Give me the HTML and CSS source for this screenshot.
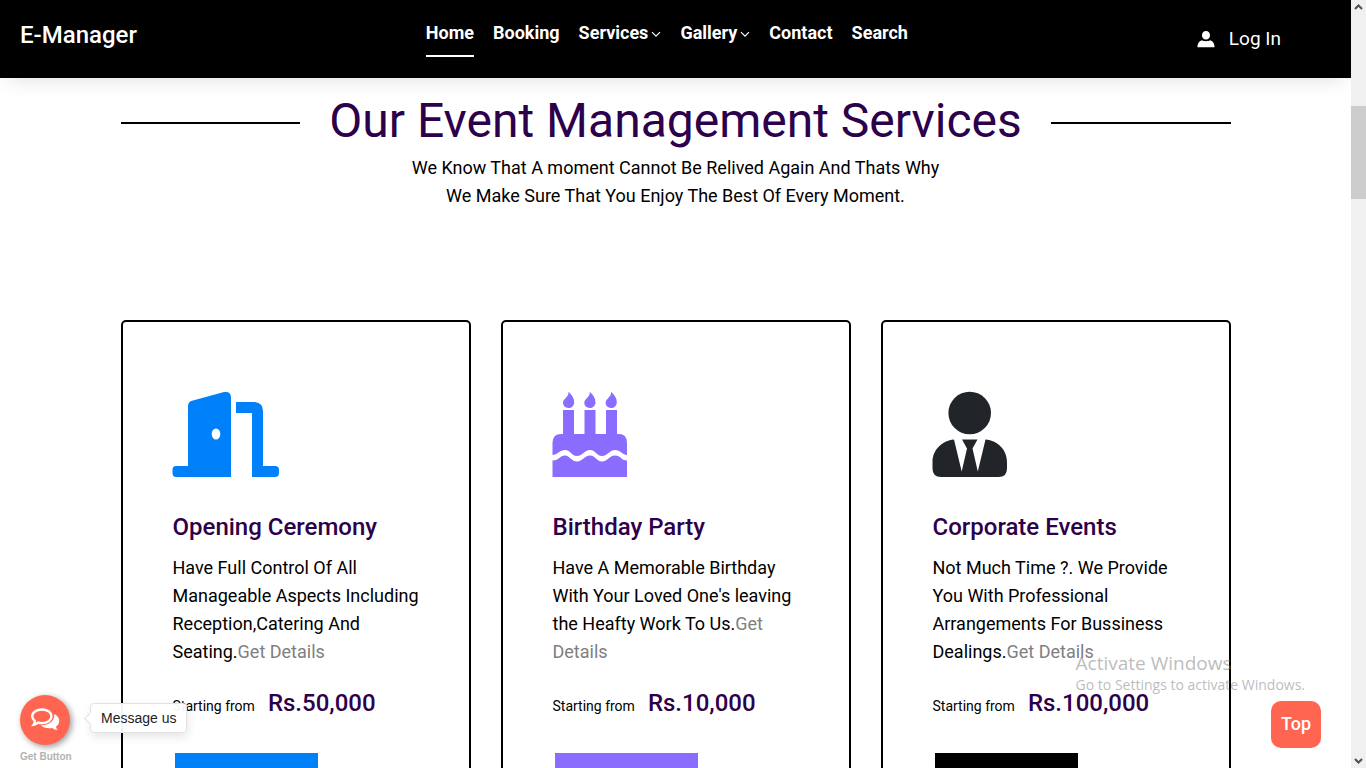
FILE: index.html
```html
<!DOCTYPE html>
<html lang="en">
<head>
<meta charset="utf-8">
<meta name="viewport" content="width=device-width, initial-scale=1">
<title>E-Manager</title>
<link rel="stylesheet" href="styles.css">
</head>
<body>
<div class="window">
  <div class="page">
    <header class="site-header">
      <a class="brand" href="#">E-Manager</a>
      <nav class="nav" aria-label="Main">
        <a class="nav-link is-active" href="#">Home</a>
        <a class="nav-link" href="#">Booking</a>
        <a class="nav-link" href="#">Services<svg class="caret" viewBox="0 0 10 7" aria-hidden="true"><path d="M1 1.2 5 5.2 9 1.2"/></svg></a>
        <a class="nav-link" href="#">Gallery<svg class="caret" viewBox="0 0 10 7" aria-hidden="true"><path d="M1 1.2 5 5.2 9 1.2"/></svg></a>
        <a class="nav-link" href="#">Contact</a>
        <a class="nav-link" href="#">Search</a>
      </nav>
      <a class="login" href="#"><svg class="login-icon" viewBox="0 0 18 17" aria-hidden="true"><path d="M9 0C6.500 0 5 1.600 5 4.500 5 6.500 6.400 8.600 9 8.600S13 6.500 13 4.500C13 1.600 11.500 0 9 0ZM5.200 9.300C2.500 10 .8 11.500.4 16.300H17.600C17.200 11.500 15.500 10 12.800 9.300 11.600 10.500 6.400 10.500 5.200 9.300Z"/></svg>Log In</a>
    </header>

    <main class="services">
      <h2 class="section-title">Our Event Management Services</h2>
      <p class="section-text">We Know That A moment Cannot Be Relived Again And Thats Why We Make Sure That You Enjoy The Best Of Every Moment.</p>

      <div class="cards">
        <article class="card card-opening">
          <svg class="card-icon" viewBox="1 1 107 86" aria-hidden="true"><path d="M4 75H16V15Q16 11 20 9.700L52 1.100Q59-.2 59 6.500V86H4Q.5 86 .5 82V79Q.5 75 4 75Z"/><path d="M64 11H83Q91 12 91 20V75H103Q107 75 107 79V82Q107 86 103 86H80V22H64Z"/><ellipse cx="44" cy="43" rx="4.300" ry="5.500" fill="#fff"/></svg>
          <h3 class="card-title">Opening Ceremony</h3>
          <p class="card-text">Have Full Control Of All Manageable Aspects Including Reception,Catering And Seating.<a class="details" href="#">Get Details</a></p>
          <p class="price"><span class="price-label">Starting from</span><strong class="price-value">Rs.50,000</strong></p>
          <button class="book" type="button" aria-label="Book opening ceremony"></button>
        </article>
        <article class="card card-birthday">
          <svg class="card-icon" viewBox="1 1 107 86" aria-hidden="true"><path id="flame" d="M16.500.8C20 4 22.300 7.500 22.200 11.500 22 15 19.500 17 16.500 17 13.300 17 11 14.800 11 11.800 11 7.500 17 6.500 16.500.8Z"/><use href="#flame" x="21.300"/><use href="#flame" x="42.600"/><path d="M.5 64V52Q.5 43 9 43H11V19H22V43H32.500V19H43.500V43H54V19H65V43H67Q75 43 75 52V64C71 64 68 59 63 59 57 59 56 65 50 65S44 59 38 59 31 65 25 65 19 59 13 59C8 59 5 64 .5 64Z"/><path d="M.5 69.500C7 69.500 8 64.500 13 64.500S19 70.500 25 70.500 32 64.500 38 64.500 44 70.500 50 70.500 57 64.500 63 64.500 69 69.500 75 69.500V86H.5Z"/></svg>
          <h3 class="card-title">Birthday Party</h3>
          <p class="card-text">Have A Memorable Birthday With Your Loved One's leaving the Heafty Work To Us.<a class="details" href="#">Get Details</a></p>
          <p class="price"><span class="price-label">Starting from</span><strong class="price-value">Rs.10,000</strong></p>
          <button class="book" type="button" aria-label="Book birthday party"></button>
        </article>
        <article class="card card-corporate">
          <svg class="card-icon" viewBox="1 1 107 86" aria-hidden="true"><circle cx="37.700" cy="22" r="21.300"/><path d="M22 48.500 29.700 80.500 35 57.500 30 48.500H45.500L40.500 57.500 45.800 80.500 53.500 48.500C66 49.500 75 59 75 71V77.500Q75 86 66.500 86H9Q.5 86 .5 77.500V71C.5 59 10 49.500 22 48.500Z"/></svg>
          <h3 class="card-title">Corporate Events</h3>
          <p class="card-text">Not Much Time ?. We Provide You With Professional Arrangements For Bussiness Dealings.<a class="details" href="#">Get Details</a></p>
          <p class="price"><span class="price-label">Starting from</span><strong class="price-value">Rs.100,000</strong></p>
          <button class="book" type="button" aria-label="Book corporate event"></button>
        </article>
      </div>
    </main>

    <div class="chat">
      <div class="chat-row">
        <button class="chat-button" type="button" aria-label="Open chat"><svg class="chat-icon" viewBox="0 0 30 24" aria-hidden="true"><path fill="none" stroke="#fff" stroke-width="2.400" d="M12 1.500C17.700 1.500 21.500 4.500 21.500 8.300S17.700 15.100 12 15.100Q9.800 15.100 8 14.500 6 16.500 3.700 16.800 5 15 4.800 13 2.200 11 2.200 8.300C2.200 4.500 6.300 1.500 12 1.500Z"/><path fill="#fff" d="M24.300 6C28 8 30 11 29 14.500 28.500 16.500 27.500 17.700 26 18.600Q26 20.500 27.500 22.100 24.500 22 22.200 20C17 20.800 13 19.500 11 17.300 19 17.500 25 12.500 24.300 6Z"/></svg></button>
        <div class="chat-bubble">Message us</div>
      </div>
      <a class="chat-credit" href="#">Get Button</a>
    </div>

    <a class="top-link" href="#">Top</a>

    <div class="activation">
      <p class="activation-title">Activate Windows</p>
      <p class="activation-text">Go to Settings to activate Windows.</p>
    </div>
  </div>

  <div class="scrollbar" aria-hidden="true">
    <svg class="scroll-arrow" viewBox="0 0 9 6"><path d="M1 5 4.500 1.500 8 5"/></svg>
    <div class="scroll-track"><div class="scroll-thumb"></div></div>
    <svg class="scroll-arrow" viewBox="0 0 9 6"><path d="M1 1 4.500 4.500 8 1"/></svg>
  </div>
</div>
</body>
</html>
```
FILE: styles.css
```css
* { box-sizing: border-box; }

body {
  margin: 0;
  background: #fff;
  color: #000;
  font-family: Roboto, "Liberation Sans", sans-serif;
  font-size: 18px;
  line-height: 28px;
}

a { color: inherit; text-decoration: none; }
h2, h3, p { margin: 0; }

.window { display: flex; height: 100vh; overflow: hidden; }
.page { position: relative; flex: 1; min-width: 0; overflow: hidden; }

/* Header */
.site-header {
  position: relative;
  display: flex;
  align-items: center;
  justify-content: space-between;
  min-height: 78px;
  padding: 0 70px 0 20px;
  background: #000;
  color: #fff;
  box-shadow: 0 10px 20px -8px rgba(0, 0, 0, 0.12);
}
.brand { padding-bottom: 8px; font-size: 24px; font-weight: 500; }
.nav { display: flex; gap: 19px; }
.nav-link {
  display: flex;
  align-items: center;
  gap: 3px;
  padding-bottom: 11px;
  border-bottom: 2px solid transparent;
  font-weight: 700;
  line-height: 22px;
}
.nav-link.is-active { border-bottom-color: #fff; }
.caret {
  width: 10px;
  height: 7px;
  margin-top: 4px;
  fill: none;
  stroke: #fff;
  stroke-width: 1.2;
}
.login { display: flex; align-items: center; gap: 14px; font-size: 19px; }
.login-icon { width: 18px; height: 17px; fill: #fff; }

/* Services */
.services { max-width: 1140px; margin: 0 auto; padding: 14px 15px 0; }
.section-title {
  display: flex;
  align-items: center;
  gap: 29px;
  padding-bottom: 4px;
  color: #2d004b;
  font-size: 48px;
  font-weight: 400;
  line-height: 58px;
}
.section-title::before,
.section-title::after {
  content: "";
  flex: 1;
  height: 2px;
  margin-top: 4px;
  background: #000;
}
.section-text { max-width: 540px; margin: 0 auto 110px; text-align: center; }

.cards { display: grid; grid-template-columns: repeat(3, 1fr); gap: 30px; }
.card {
  padding: 70px 40px 50px 50px;
  border: 2px solid #000;
  border-radius: 5px;
}
.card-opening { --accent: #0080f9; --button: #0080f9; }
.card-birthday { --accent: #8a6cff; --button: #8a6cff; }
.card-corporate { --accent: #212529; --button: #000; }
.card-icon {
  display: block;
  width: 107px;
  height: 86px;
  overflow: visible;
  fill: var(--accent);
}
.card-title {
  margin: 35px 0 13px;
  color: #2d004b;
  font-size: 24px;
  font-weight: 500;
}
.details { color: #808080; }
.price { display: flex; align-items: baseline; gap: 13px; margin: 23px 0 33px; }
.price-label { font-size: 14px; }
.price-value { color: #2d004b; font-size: 24px; font-weight: 500; }
.book {
  display: block;
  width: 143px;
  height: 50px;
  margin-left: 2px;
  border: 0;
  background: var(--button);
}

/* Floating chat widget */
.chat {
  position: absolute;
  bottom: 4px;
  left: 20px;
  font-family: "Liberation Sans", Arial, sans-serif;
}
.chat-row { display: flex; align-items: center; gap: 20px; }
.chat-button {
  display: grid;
  place-items: center;
  width: 50px;
  height: 50px;
  padding: 0;
  border: 0;
  border-radius: 50%;
  background: #ff6550;
  box-shadow: 2px 2px 6px rgba(0, 0, 0, 0.4);
}
.chat-icon { width: 30px; height: 24px; }
.chat-bubble {
  position: relative;
  margin-bottom: 4px;
  padding: 0 10px;
  border: 1px solid #e2e2e2;
  border-radius: 4px;
  background: rgba(255, 255, 255, 0.95);
  box-shadow: 1px 4px 10px rgba(0, 0, 0, 0.1);
  font-size: 14px;
  color: #222;
}
.chat-bubble::before {
  content: "";
  position: absolute;
  top: 10px;
  left: -5px;
  width: 8px;
  height: 8px;
  border: solid #e2e2e2;
  border-width: 0 0 1px 1px;
  background: #fff;
  transform: rotate(45deg);
}
.chat-credit {
  display: block;
  padding-top: 5px;
  color: #b2b2b2;
  font-size: 10px;
  font-weight: 700;
  line-height: 14px;
}

.top-link {
  position: absolute;
  right: 30px;
  bottom: 20px;
  padding: 9px 10px 10px;
  border-radius: 10px;
  background: #ff6550;
  color: #fff;
  font-size: 18px;
  font-weight: 500;
}

.activation {
  position: absolute;
  right: 46px;
  bottom: 73px;
  color: rgba(120, 120, 120, 0.5);
  font-family: "Open Sans", "Noto Sans", sans-serif;
  pointer-events: none;
}
.activation-title { font-size: 19px; line-height: 24px; }
.activation-text { font-size: 14px; line-height: 20px; }

/* Scrollbar */
.scrollbar {
  display: flex;
  flex-direction: column;
  align-items: center;
  width: 15px;
  padding: 4px 0;
  background: #f0f0f0;
}
.scroll-arrow { width: 9px; height: 6px; fill: none; stroke: #505050; stroke-width: 2; }
.scroll-track { flex: 1; align-self: stretch; padding-top: 96px; }
.scroll-thumb { height: 93px; background: #cdcdcd; }
```
